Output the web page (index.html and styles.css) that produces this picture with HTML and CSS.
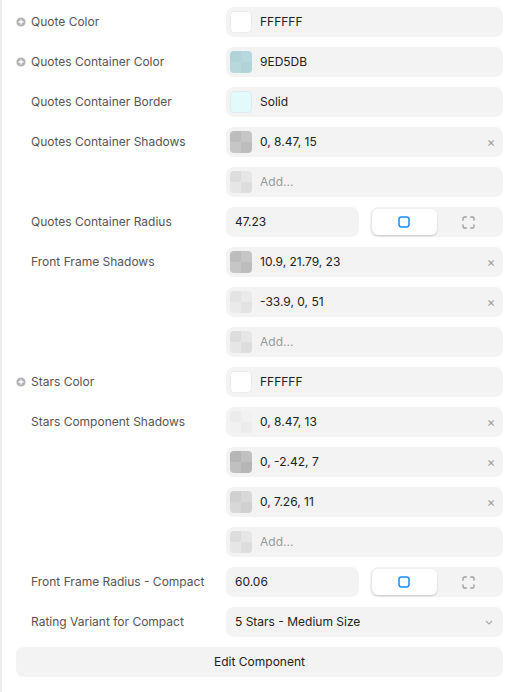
FILE: index.html
```html
<!DOCTYPE html>
<html>
<head>
<meta charset="utf-8">
<link rel="stylesheet" href="styles.css">
</head>
<body>
<div class="panel">
  <div class="row">
    <div class="label"><span class="plus"><svg viewBox="0 0 10 10" width="10" height="10"><circle cx="5" cy="5" r="4.6" fill="#b3b3b3"/><path d="M5 2.6V7.4M2.6 5H7.4" stroke="#fff" stroke-width="1.3"/></svg></span>Quote Color</div>
    <div class="controls">
      <div class="field"><span class="sw sw-white"></span><span class="val">FFFFFF</span></div>
    </div>
  </div>
  <div class="row">
    <div class="label"><span class="plus"><svg viewBox="0 0 10 10" width="10" height="10"><circle cx="5" cy="5" r="4.6" fill="#b3b3b3"/><path d="M5 2.6V7.4M2.6 5H7.4" stroke="#fff" stroke-width="1.3"/></svg></span>Quotes Container Color</div>
    <div class="controls">
      <div class="field"><span class="sw sw-teal"></span><span class="val">9ED5DB</span></div>
    </div>
  </div>
  <div class="row">
    <div class="label noicon">Quotes Container Border</div>
    <div class="controls">
      <div class="field"><span class="sw sw-cyan"></span><span class="val">Solid</span></div>
    </div>
  </div>
  <div class="row">
    <div class="label noicon">Quotes Container Shadows</div>
    <div class="controls">
      <div class="field"><span class="sw sw-mid"></span><span class="val">0, 8.47, 15</span><span class="x">×</span></div>
      <div class="field"><span class="sw sw-add"></span><span class="val add">Add...</span></div>
    </div>
  </div>
  <div class="row">
    <div class="label noicon">Quotes Container Radius</div>
    <div class="controls split">
      <div class="field num"><span class="val">47.23</span></div>
      <div class="toggle">
        <span class="tbtn active"><svg viewBox="0 0 12 12" width="12" height="12"><rect x="1" y="1" width="10" height="10" rx="2.4" fill="none" stroke="#1a8cff" stroke-width="1.5"/></svg></span>
        <span class="tbtn"><svg viewBox="0 0 13 13" width="13" height="13"><path d="M1 4.2V2.6A1.6 1.6 0 0 1 2.6 1H4.2M8.8 1H10.4A1.6 1.6 0 0 1 12 2.6V4.2M12 8.8V10.4A1.6 1.6 0 0 1 10.4 12H8.8M4.2 12H2.6A1.6 1.6 0 0 1 1 10.4V8.8" fill="none" stroke="#9a9a9a" stroke-width="1.3" stroke-linecap="round"/></svg></span>
      </div>
    </div>
  </div>
  <div class="row">
    <div class="label noicon">Front Frame Shadows</div>
    <div class="controls">
      <div class="field"><span class="sw sw-mid"></span><span class="val">10.9, 21.79, 23</span><span class="x">×</span></div>
      <div class="field"><span class="sw sw-light"></span><span class="val">-33.9, 0, 51</span><span class="x">×</span></div>
      <div class="field"><span class="sw sw-add"></span><span class="val add">Add...</span></div>
    </div>
  </div>
  <div class="row">
    <div class="label"><span class="plus"><svg viewBox="0 0 10 10" width="10" height="10"><circle cx="5" cy="5" r="4.6" fill="#b3b3b3"/><path d="M5 2.6V7.4M2.6 5H7.4" stroke="#fff" stroke-width="1.3"/></svg></span>Stars Color</div>
    <div class="controls">
      <div class="field"><span class="sw sw-white"></span><span class="val">FFFFFF</span></div>
    </div>
  </div>
  <div class="row">
    <div class="label noicon">Stars Component Shadows</div>
    <div class="controls">
      <div class="field"><span class="sw sw-faint"></span><span class="val">0, 8.47, 13</span><span class="x">×</span></div>
      <div class="field"><span class="sw sw-dark"></span><span class="val">0, -2.42, 7</span><span class="x">×</span></div>
      <div class="field"><span class="sw sw-soft"></span><span class="val">0, 7.26, 11</span><span class="x">×</span></div>
      <div class="field"><span class="sw sw-add"></span><span class="val add">Add...</span></div>
    </div>
  </div>
  <div class="row">
    <div class="label noicon">Front Frame Radius - Compact</div>
    <div class="controls split">
      <div class="field num"><span class="val">60.06</span></div>
      <div class="toggle">
        <span class="tbtn active"><svg viewBox="0 0 12 12" width="12" height="12"><rect x="1" y="1" width="10" height="10" rx="2.4" fill="none" stroke="#1a8cff" stroke-width="1.5"/></svg></span>
        <span class="tbtn"><svg viewBox="0 0 13 13" width="13" height="13"><path d="M1 4.2V2.6A1.6 1.6 0 0 1 2.6 1H4.2M8.8 1H10.4A1.6 1.6 0 0 1 12 2.6V4.2M12 8.8V10.4A1.6 1.6 0 0 1 10.4 12H8.8M4.2 12H2.6A1.6 1.6 0 0 1 1 10.4V8.8" fill="none" stroke="#9a9a9a" stroke-width="1.3" stroke-linecap="round"/></svg></span>
      </div>
    </div>
  </div>
  <div class="row">
    <div class="label noicon">Rating Variant for Compact</div>
    <div class="controls">
      <div class="field select"><span class="val">5 Stars - Medium Size</span><svg class="chev" viewBox="0 0 8 5" width="8" height="5"><path d="M1 1L4 4L7 1" fill="none" stroke="#a8a8a8" stroke-width="1.1"/></svg></div>
    </div>
  </div>
  <div class="editbtn">Edit Component</div>
</div>
</body>
</html>
```

FILE: styles.css
```css
* { box-sizing: border-box; }
html, body { margin: 0; padding: 0; background: #fff; }
body {
  font-family: Inter, "Noto Sans", sans-serif;
  font-size: 12px;
  color: #222;
  width: 517px;
  height: 692px;
  border-left: 2px solid #ececec;
}
.panel {
  padding: 7px 14px 0 14px;
  display: flex;
  flex-direction: column;
  gap: 10px;
}
.row {
  display: grid;
  grid-template-columns: 210px 277px;
  align-items: start;
}
.label {
  height: 30px;
  display: flex;
  align-items: center;
  gap: 5px;
  color: #555;
  white-space: nowrap;
  padding-bottom: 2px;
}
.label.noicon { padding-left: 15px; }
.plus { width: 10px; height: 10px; display: flex; margin-top: 1px; }
.controls {
  display: flex;
  flex-direction: column;
  gap: 10px;
}
.controls.split {
  display: grid;
  grid-template-columns: 133px 133px;
  column-gap: 11px;
}
.field {
  height: 30px;
  background: #f3f3f3;
  border-radius: 8px;
  display: flex;
  align-items: center;
  padding: 0 4px;
}
.val { margin-left: 8px; color: #222; flex: 1; padding-bottom: 2px; }
.field.num, .field.select { padding-left: 9px; }
.field.select { padding-right: 10px; }
.field.num .val, .field.select .val { margin-left: 0; }
.val.add { color: #999; }
.x {
  color: #a0a0a0;
  font-size: 13px;
  width: 16px;
  text-align: center;
  margin-right: 0;
  padding-bottom: 1px;
}
.sw {
  width: 22px;
  height: 22px;
  border-radius: 4px;
  flex: none;
}
.sw-white { background: #fff; border: 1px solid #ebebeb; }
.sw-cyan { background: #e3fafd; border: 1px solid #dcecee; }
.sw-teal { background: conic-gradient(#b7d8dc 0 25%, #b0d4d8 0 50%, #b7d8dc 0 75%, #b0d4d8 0); }
.sw-mid { background: conic-gradient(#c6c6c6 0 25%, #bdbdbd 0 50%, #c6c6c6 0 75%, #bdbdbd 0); }
.sw-dark { background: conic-gradient(#c0c0c0 0 25%, #b6b6b6 0 50%, #c0c0c0 0 75%, #b6b6b6 0); }
.sw-soft { background: conic-gradient(#d8d8d8 0 25%, #d0d0d0 0 50%, #d8d8d8 0 75%, #d0d0d0 0); }
.sw-light { background: conic-gradient(#eaeaea 0 25%, #e3e3e3 0 50%, #eaeaea 0 75%, #e3e3e3 0); }
.sw-faint { background: conic-gradient(#f1f1f1 0 25%, #ececec 0 50%, #f1f1f1 0 75%, #ececec 0); }
.sw-add { background: conic-gradient(#e6e6e6 0 25%, #dddddd 0 50%, #e6e6e6 0 75%, #dddddd 0); }
.toggle {
  height: 30px;
  background: #f3f3f3;
  border-radius: 8px;
  padding: 2px;
  display: flex;
}
.tbtn {
  flex: 1;
  display: flex;
  align-items: center;
  justify-content: center;
  border-radius: 6px;
}
.tbtn.active {
  background: #fff;
  box-shadow: 0 1px 2px rgba(0,0,0,0.18);
}
.chev { flex: none; }
.editbtn {
  height: 30px;
  background: #f3f3f3;
  border-radius: 8px;
  display: flex;
  align-items: center;
  justify-content: center;
  color: #222;
  padding-bottom: 2px;
}
```
